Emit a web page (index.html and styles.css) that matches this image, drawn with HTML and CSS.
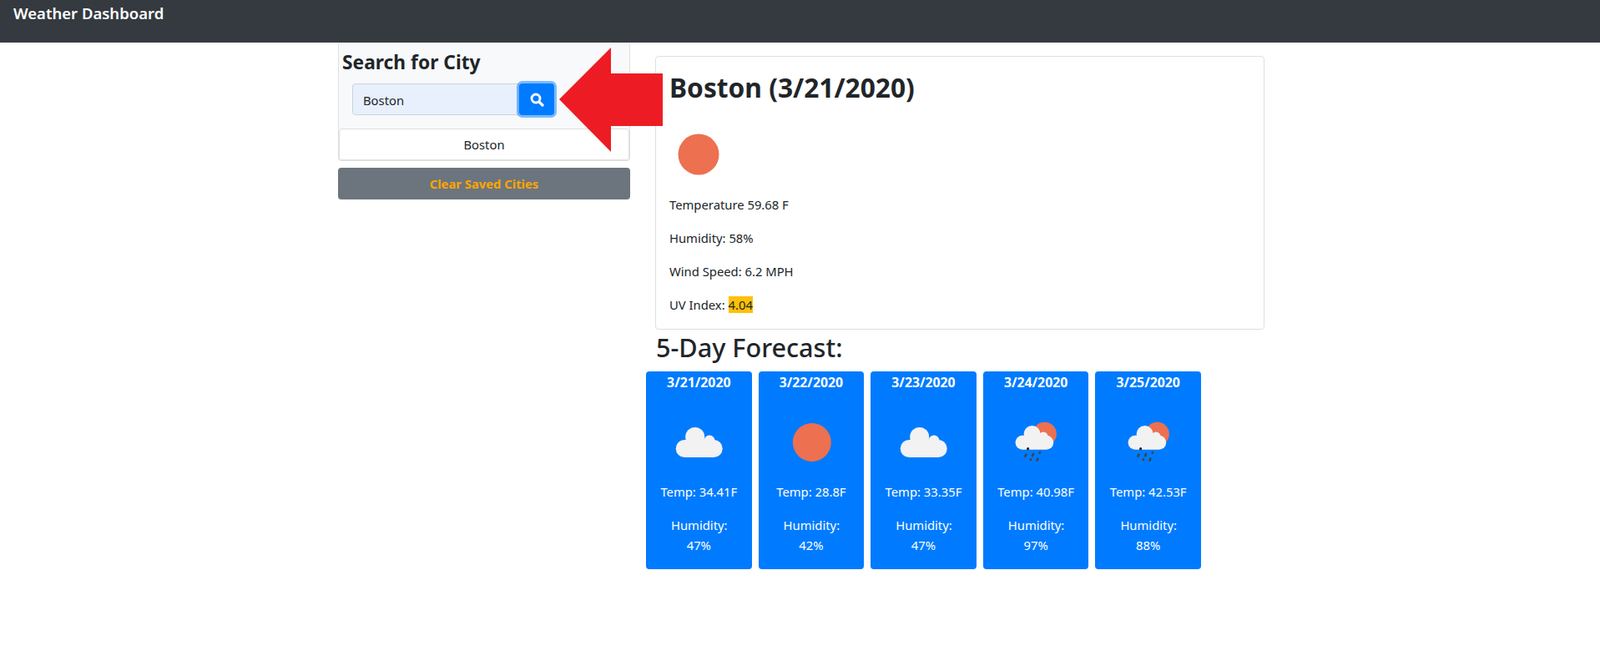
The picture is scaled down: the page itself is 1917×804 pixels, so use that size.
FILE: index.html
```html
<!DOCTYPE html>
<html lang="en">
<head>
    <meta charset="UTF-8">
    <title>Weather Dashboard</title>
    <link rel="stylesheet" href="styles.css">
</head>
<body>
<nav class="navbar">Weather Dashboard</nav>

<!-- red arrow drawn over the page, points at the search button -->
<svg class="arrow" width="124" height="126" viewBox="0 0 124 126">
    <polygon points="0,62 62,0 62,31 124,31 124,94 62,94 62,125" fill="#ed1c24"/>
</svg>

<div class="page">
    <div class="side">
        <div class="search-card">
            <h4 class="search-title">Search for City</h4>
            <div class="search-row">
                <div class="city-input">Boston</div>
                <button class="search-btn">
                    <svg width="17" height="17" viewBox="0 0 17 17">
                        <circle cx="7" cy="7" r="5" fill="none" stroke="#fff" stroke-width="2.8"/>
                        <line x1="10.8" y1="10.8" x2="15" y2="15" stroke="#fff" stroke-width="3.2" stroke-linecap="round"/>
                    </svg>
                </button>
            </div>
            <div class="saved-city">Boston</div>
        </div>
        <button class="clear-btn">Clear Saved Cities</button>
    </div>

    <div class="main">
        <div class="today-card">
            <h2 class="today-title">Boston (3/21/2020)</h2>
            <div class="today-icon">
                <svg width="50" height="50" viewBox="0 0 50 50"><circle cx="25" cy="25" r="24.5" fill="#ed7050"/></svg>
            </div>
            <p>Temperature 59.68 F</p>
            <p>Humidity: 58%</p>
            <p>Wind Speed: 6.2 MPH</p>
            <p class="last">UV Index: <span class="uv">4.04</span></p>
        </div>
        <h3 class="forecast-title">5-Day Forecast:</h3>
        <div class="forecast">
            <div class="day">
                <div class="date">3/21/2020</div>
                <div class="day-icon">
                    <svg width="60" height="50" viewBox="0 0 60 50"><use href="#cloud"/></svg>
                </div>
                <p>Temp: 34.41F</p>
                <p class="hum">Humidity: 47%</p>
            </div>
            <div class="day">
                <div class="date">3/22/2020</div>
                <div class="day-icon">
                    <svg width="60" height="50" viewBox="0 0 60 50"><circle cx="30.8" cy="27" r="23" fill="#ed7050"/></svg>
                </div>
                <p>Temp: 28.8F</p>
                <p class="hum">Humidity: 42%</p>
            </div>
            <div class="day">
                <div class="date">3/23/2020</div>
                <div class="day-icon">
                    <svg width="60" height="50" viewBox="0 0 60 50"><use href="#cloud"/></svg>
                </div>
                <p>Temp: 33.35F</p>
                <p class="hum">Humidity: 47%</p>
            </div>
            <div class="day">
                <div class="date">3/24/2020</div>
                <div class="day-icon">
                    <svg width="60" height="50" viewBox="0 0 60 50"><use href="#rain"/></svg>
                </div>
                <p>Temp: 40.98F</p>
                <p class="hum">Humidity: 97%</p>
            </div>
            <div class="day">
                <div class="date">3/25/2020</div>
                <div class="day-icon">
                    <svg width="60" height="50" viewBox="0 0 60 50"><use href="#rain"/></svg>
                </div>
                <p>Temp: 42.53F</p>
                <p class="hum">Humidity: 88%</p>
            </div>
        </div>
    </div>
</div>

<!-- shared weather icons -->
<svg class="defs" width="0" height="0">
    <defs>
        <g id="cloud" fill="#f2f2f2">
            <circle cx="25.7" cy="20.5" r="11.5"/>
            <circle cx="43" cy="25" r="6.5"/>
            <rect x="2.7" y="24" width="56" height="21" rx="10.5"/>
        </g>
        <g id="rain">
            <circle cx="40.6" cy="17" r="14.3" fill="#ed7050"/>
            <g fill="#f2f2f2">
                <circle cx="25.6" cy="17" r="10"/>
                <circle cx="39" cy="20" r="5.5"/>
                <rect x="5.6" y="18.7" width="45.6" height="17" rx="8.5"/>
            </g>
            <circle cx="20.6" cy="34.7" r="1.6" fill="#222"/>
            <g stroke="#444" stroke-width="2.6" stroke-linecap="round">
                <line x1="18.4" y1="41.6" x2="17.4" y2="43.8"/>
                <line x1="27.1" y1="40.9" x2="26.1" y2="43.1"/>
                <line x1="35.1" y1="38.9" x2="34.7" y2="39.7"/>
                <line x1="24" y1="47.4" x2="23.8" y2="48"/>
                <line x1="32.3" y1="46.7" x2="31.5" y2="48.7"/>
            </g>
        </g>
    </defs>
</svg>
</body>
</html>
```

FILE: styles.css
```css
* {
    box-sizing: border-box;
}
body {
    margin: 0;
    background-color: #fff;
    color: #212529;
    font-family: "Noto Sans", sans-serif;
    font-size: 14.8px;
    line-height: 24px;
}
p {
    margin: 0 0 16px 0;
}
h2, h3, h4 {
    margin: 0;
    font-weight: 500;
}

.navbar {
    height: 51px;
    padding: 4px 16px 0;
    background-color: #343a40;
    color: #fff;
    font-size: 18.5px;
    font-weight: 600;
}

.arrow {
    position: absolute;
    left: 670px;
    top: 57px;
}

.page {
    display: flex;
    padding-left: 405px;
}

.side {
    width: 350px;
}
.search-card {
    height: 142px;
    padding-top: 6px;
    background-color: #f8f9fa;
    border: 1px solid #dfdfdf;
    border-top: none;
    border-radius: 4px;
}
.search-title {
    padding-left: 4px;
    font-size: 22.8px;
    font-weight: 700;
    line-height: 36px;
}
.search-row {
    display: flex;
    margin: 7px 0 16px 16px;
}
.city-input {
    width: 200px;
    height: 38px;
    padding: 7px 12px;
    background-color: #e8f0fe;
    border: 1px solid #ced4da;
    border-radius: 4px 0 0 4px;
}
.search-btn {
    display: flex;
    align-items: center;
    justify-content: center;
    width: 42px;
    height: 38px;
    padding: 0;
    background-color: #007bff;
    border: none;
    border-radius: 4px;
    box-shadow: 0 0 0 3px rgba(0, 123, 255, .5);
}
.saved-city {
    height: 38px;
    padding-top: 6px;
    background-color: #fff;
    border: 1px solid #dfdfdf;
    border-radius: 4px;
    text-align: center;
}
.clear-btn {
    display: block;
    width: 100%;
    height: 38px;
    margin-top: 8px;
    background-color: #6c757d;
    border: none;
    border-radius: 4px;
    color: orange;
    font-family: inherit;
    font-size: 14.8px;
    font-weight: 700;
}

.main {
    width: 741px;
    margin-left: 19px;
    padding-top: 16px;
}
.today-card {
    width: 730px;
    height: 328px;
    margin-left: 11px;
    padding: 17px 16px;
    background-color: #fff;
    border: 1px solid #dfdfdf;
    border-radius: 4px;
}
.today-title {
    font-size: 31.7px;
    font-weight: 700;
    line-height: 40px;
}
.today-icon {
    height: 50px;
    margin: 35px 0 23px 10px;
}
.last {
    margin: 0;
}
.uv {
    background-color: #ffc107;
}
.forecast-title {
    margin-left: 12px;
    font-size: 30.6px;
    line-height: 42px;
}
.forecast {
    display: flex;
    gap: 8px;
    margin-top: 8px;
}
.day {
    width: 126.6px;
    height: 237px;
    padding-top: 1px;
    background-color: #007bff;
    border-radius: 4px;
    color: #fff;
    text-align: center;
}
.date {
    font-size: 15.8px;
    font-weight: 700;
}
.day-icon {
    display: flex;
    align-items: center;
    justify-content: center;
    height: 50px;
    margin: 33px 0 24px;
}
.day p {
    margin: 0 0 16px 0;
}
.day .hum {
    padding: 0 30px;
}
.defs {
    position: absolute;
}
```
